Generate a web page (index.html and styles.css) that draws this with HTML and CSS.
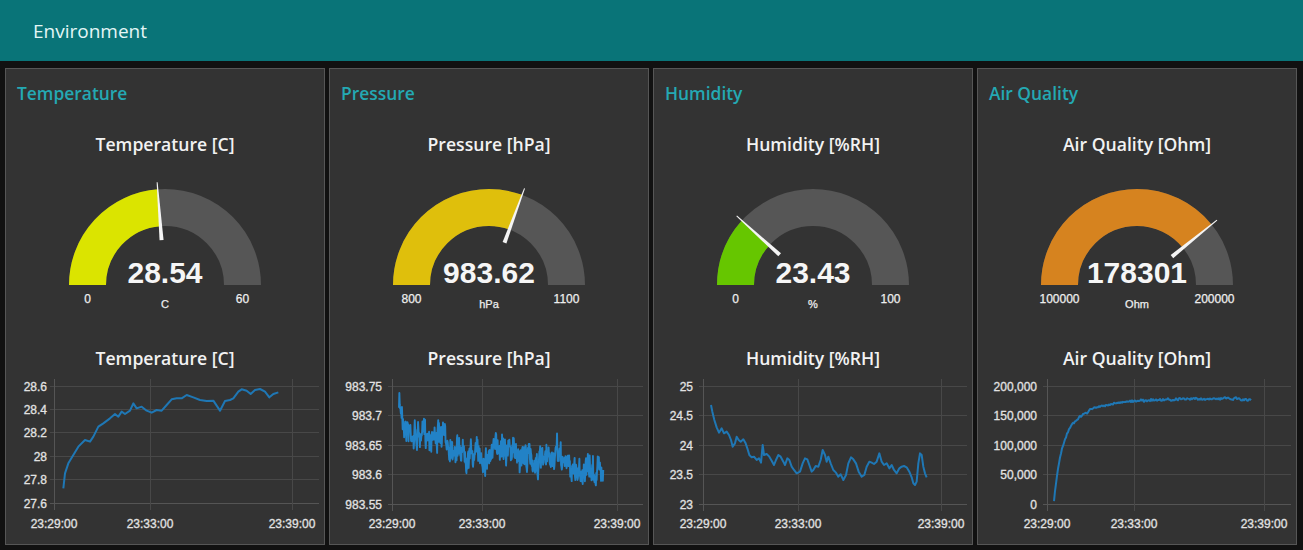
FILE: index.html
```html
<!DOCTYPE html>
<html lang="en">
<head>
<meta charset="utf-8">
<title>Environment</title>
<link rel="stylesheet" href="styles.css">
</head>
<body>
<header class="topbar"><span class="topbar-title">Environment</span></header>
<main class="board">

  <section class="card">
    <h2 class="group-title">Temperature</h2>
    <h3 class="widget-title gauge-title">Temperature [C]</h3>
    <svg class="gauge" width="318" height="160" viewBox="0 0 318 160">
      <path class="g-bg" d="M81.5 129 A77.5 77.5 0 0 1 236.5 129"/>
      <path class="g-val" d="M81.5 129 A77.5 77.5 0 0 1 236.5 129" pathLength="100" stroke="#dbe400" stroke-dasharray="47.57 100"/>
      <polygon class="needle" points="114,127 114,131 56,129.5 56,128.5" transform="rotate(85.62 159 129)"/>
      <text class="g-value" x="159" y="127">28.54</text>
      <text class="g-lim" x="81.5" y="147">0</text>
      <text class="g-lim" x="236.5" y="147">60</text>
      <text class="g-unit" x="159" y="152">C</text>
    </svg>
    <h3 class="widget-title chart-title">Temperature [C]</h3>
    <svg class="chart" width="318" height="166" viewBox="0 0 318 166">
      <g class="grid">
        <line x1="44" x2="313" y1="16.5" y2="16.5"/><line x1="44" x2="313" y1="39.5" y2="39.5"/>
        <line x1="44" x2="313" y1="62.5" y2="62.5"/><line x1="44" x2="313" y1="86.5" y2="86.5"/>
        <line x1="44" x2="313" y1="109.5" y2="109.5"/><line class="axis" x1="44" x2="313" y1="133.5" y2="133.5"/>
        <line class="axis" x1="48.5" x2="48.5" y1="9" y2="140"/><line x1="144.5" x2="144.5" y1="9" y2="140"/><line x1="286.5" x2="286.5" y1="9" y2="140"/>
      </g>
      <g class="ylab">
        <text x="41" y="21">28.6</text><text x="41" y="44">28.4</text><text x="41" y="67">28.2</text>
        <text x="41" y="91">28</text><text x="41" y="114">27.8</text><text x="41" y="138">27.6</text>
      </g>
      <g class="xlab">
        <text x="48" y="157.5">23:29:00</text><text x="144" y="157.5">23:33:00</text><text x="286" y="157.5">23:39:00</text>
      </g>
      <polyline class="series" transform="translate(-6 -30) scale(0.33333)" points="190,445 195,400 205,370 220,345 235,320 255,300 270,305 280,290 295,260 310,250 330,235 345,222 355,230 365,215 375,222 390,212 400,190 410,205 425,200 440,212 455,218 470,210 485,212 500,195 515,178 530,175 545,175 560,165 580,172 600,180 620,183 640,182 660,212 675,183 690,180 700,175 715,155 725,148 740,152 752,162 765,150 780,147 795,155 808,172 820,162 835,157"/>
    </svg>
  </section>

  <section class="card">
    <h2 class="group-title">Pressure</h2>
    <h3 class="widget-title gauge-title">Pressure [hPa]</h3>
    <svg class="gauge" width="318" height="160" viewBox="0 0 318 160">
      <path class="g-bg" d="M81.5 129 A77.5 77.5 0 0 1 236.5 129"/>
      <path class="g-val" d="M81.5 129 A77.5 77.5 0 0 1 236.5 129" pathLength="100" stroke="#dfbf0c" stroke-dasharray="61.21 100"/>
      <polygon class="needle" points="114,127 114,131 56,129.5 56,128.5" transform="rotate(110.17 159 129)"/>
      <text class="g-value" x="159" y="127">983.62</text>
      <text class="g-lim" x="81.5" y="147">800</text>
      <text class="g-lim" x="236.5" y="147">1100</text>
      <text class="g-unit" x="159" y="152">hPa</text>
    </svg>
    <h3 class="widget-title chart-title">Pressure [hPa]</h3>
    <svg class="chart" width="318" height="166" viewBox="0 0 318 166">
      <g class="grid">
        <line x1="58" x2="313" y1="16.5" y2="16.5"/><line x1="58" x2="313" y1="45.5" y2="45.5"/>
        <line x1="58" x2="313" y1="75.5" y2="75.5"/><line x1="58" x2="313" y1="104.5" y2="104.5"/>
        <line class="axis" x1="58" x2="313" y1="134.5" y2="134.5"/>
        <line class="axis" x1="62.5" x2="62.5" y1="9" y2="141"/><line x1="152.5" x2="152.5" y1="9" y2="141"/><line x1="287.5" x2="287.5" y1="9" y2="141"/>
      </g>
      <g class="ylab">
        <text x="52" y="21">983.75</text><text x="52" y="50">983.7</text><text x="52" y="80">983.65</text>
        <text x="52" y="109">983.6</text><text x="52" y="139">983.55</text>
      </g>
      <g class="xlab">
        <text x="62" y="157.5">23:29:00</text><text x="152" y="157.5">23:33:00</text><text x="287" y="157.5">23:39:00</text>
      </g>
      <polyline id="pressure-line" class="series dense" transform="translate(0 -30) scale(0.33333)" points=""/>
    </svg>
  </section>

  <section class="card">
    <h2 class="group-title">Humidity</h2>
    <h3 class="widget-title gauge-title">Humidity [%RH]</h3>
    <svg class="gauge" width="318" height="160" viewBox="0 0 318 160">
      <path class="g-bg" d="M81.5 129 A77.5 77.5 0 0 1 236.5 129"/>
      <path class="g-val" d="M81.5 129 A77.5 77.5 0 0 1 236.5 129" pathLength="100" stroke="#66c600" stroke-dasharray="23.43 100"/>
      <polygon class="needle" points="114,127 114,131 56,129.5 56,128.5" transform="rotate(42.17 159 129)"/>
      <text class="g-value" x="159" y="127">23.43</text>
      <text class="g-lim" x="81.5" y="147">0</text>
      <text class="g-lim" x="236.5" y="147">100</text>
      <text class="g-unit" x="159" y="152">%</text>
    </svg>
    <h3 class="widget-title chart-title">Humidity [%RH]</h3>
    <svg class="chart" width="318" height="166" viewBox="0 0 318 166">
      <g class="grid">
        <line x1="45" x2="313" y1="16.5" y2="16.5"/><line x1="45" x2="313" y1="45.5" y2="45.5"/>
        <line x1="45" x2="313" y1="75.5" y2="75.5"/><line x1="45" x2="313" y1="104.5" y2="104.5"/>
        <line class="axis" x1="45" x2="313" y1="134.5" y2="134.5"/>
        <line class="axis" x1="49.5" x2="49.5" y1="9" y2="141"/><line x1="144.5" x2="144.5" y1="9" y2="141"/><line x1="287.5" x2="287.5" y1="9" y2="141"/>
      </g>
      <g class="ylab">
        <text x="39" y="21">25</text><text x="39" y="50">24.5</text><text x="39" y="80">24</text>
        <text x="39" y="109">23.5</text><text x="39" y="139">23</text>
      </g>
      <g class="xlab">
        <text x="49" y="157.5">23:29:00</text><text x="144" y="157.5">23:33:00</text><text x="287" y="157.5">23:39:00</text>
      </g>
      <polyline class="series" transform="translate(-4 -30) scale(0.33333)" points="183,195 187,215 193,240 200,262 207,278 215,265 222,280 230,275 237,285 243,300 248,320 255,310 260,290 266,300 272,305 280,298 287,310 292,325 298,345 305,352 312,350 320,360 327,355 333,368 338,315 342,345 350,342 358,350 365,362 372,375 378,360 385,345 392,350 400,365 405,375 412,355 418,360 425,380 432,390 440,400 450,395 458,370 465,355 472,358 478,375 485,395 490,390 497,378 505,380 512,360 518,330 525,345 530,365 535,350 542,370 550,390 558,398 565,410 572,403 580,420 588,405 595,370 603,352 610,358 618,370 626,395 635,410 643,405 650,380 658,365 665,368 672,372 680,365 688,340 695,365 702,375 710,370 718,385 725,375 732,390 740,400 748,385 755,380 762,378 770,382 778,395 785,412 790,430 795,435 800,425 805,370 810,340 815,345 820,380 825,400 830,412"/>
    </svg>
  </section>

  <section class="card">
    <h2 class="group-title">Air Quality</h2>
    <h3 class="widget-title gauge-title">Air Quality [Ohm]</h3>
    <svg class="gauge" width="318" height="160" viewBox="0 0 318 160">
      <path class="g-bg" d="M81.5 129 A77.5 77.5 0 0 1 236.5 129"/>
      <path class="g-val" d="M81.5 129 A77.5 77.5 0 0 1 236.5 129" pathLength="100" stroke="#d6831f" stroke-dasharray="78.30 100"/>
      <polygon class="needle" points="114,127 114,131 56,129.5 56,128.5" transform="rotate(140.94 159 129)"/>
      <text class="g-value" x="159" y="127">178301</text>
      <text class="g-lim" x="81.5" y="147">100000</text>
      <text class="g-lim" x="236.5" y="147">200000</text>
      <text class="g-unit" x="159" y="152">Ohm</text>
    </svg>
    <h3 class="widget-title chart-title">Air Quality [Ohm]</h3>
    <svg class="chart" width="318" height="166" viewBox="0 0 318 166">
      <g class="grid">
        <line x1="65" x2="313" y1="16.5" y2="16.5"/><line x1="65" x2="313" y1="45.5" y2="45.5"/>
        <line x1="65" x2="313" y1="75.5" y2="75.5"/><line x1="65" x2="313" y1="104.5" y2="104.5"/>
        <line class="axis" x1="65" x2="313" y1="134.5" y2="134.5"/>
        <line class="axis" x1="69.5" x2="69.5" y1="9" y2="141"/><line x1="156.5" x2="156.5" y1="9" y2="141"/><line x1="286.5" x2="286.5" y1="9" y2="141"/>
      </g>
      <g class="ylab">
        <text x="59" y="21">200,000</text><text x="59" y="50">150,000</text><text x="59" y="80">100,000</text>
        <text x="59" y="109">50,000</text><text x="59" y="139">0</text>
      </g>
      <g class="xlab">
        <text x="69" y="157.5">23:29:00</text><text x="156" y="157.5">23:33:00</text><text x="286" y="157.5">23:39:00</text>
      </g>
      <polyline id="air-line" class="series" transform="translate(-3 -30) scale(0.33333)" points=""/>
    </svg>
  </section>

</main>
<script src="script.js"></script>
</body>
</html>
```

FILE: styles.css
```css
* { box-sizing: border-box; }
html, body { margin: 0; padding: 0; }
body {
  background: #111111;
  width: 1303px;
  height: 550px;
  overflow: hidden;
  font-family: "Open Sans", "Noto Sans", sans-serif;
}
.topbar {
  height: 61px;
  background: #097478;
  display: flex;
  align-items: center;
  padding-left: 33px;
}
.topbar-title {
  color: #e4f6f6;
  font-size: 19px;
  font-weight: 400;
  line-height: 24px;
  padding-top: 1px;
}
.board {
  display: flex;
  gap: 4px;
  padding: 7px 5px 0 5px;
}
.card {
  width: 320px;
  height: 477px;
  background: #333333;
  border: 1px solid #565656;
  display: flex;
  flex-direction: column;
}
.group-title {
  margin: 12px 0 0 11px;
  font-size: 17.4px;
  font-weight: 600;
  line-height: 24px;
  color: #24a9b3;
}
.widget-title {
  margin: 0;
  text-align: center;
  font-size: 17.6px;
  font-weight: 600;
  line-height: 24px;
  color: #f2f2f2;
}
.gauge-title { margin-top: 27px; }
.chart-title { margin-top: 30px; }
.gauge, .chart { display: block; }

.g-bg { fill: none; stroke: #565656; stroke-width: 37; }
.g-val { fill: none; stroke-width: 37; }
.needle { fill: #f4f4f4; }
.g-value {
  font-family: "Liberation Sans", Arial, sans-serif;
  font-weight: 700;
  font-size: 30px;
  fill: #f6f6f6;
  text-anchor: middle;
}
.g-lim, .g-unit {
  font-family: "Liberation Sans", Arial, sans-serif;
  font-size: 12px;
  fill: #eeeeee;
  stroke: #eeeeee;
  stroke-width: 0.25px;
  text-anchor: middle;
}
.g-unit { font-size: 11px; }

.grid line { stroke: #484848; stroke-width: 1; shape-rendering: crispEdges; }
.grid line.axis { stroke: #555555; }
.ylab text, .xlab text {
  font-family: "Liberation Sans", Arial, sans-serif;
  font-size: 12px;
  fill: #e2e2e2;
  stroke: #e2e2e2;
  stroke-width: 0.3px;
}
.ylab text { text-anchor: end; }
.xlab text { text-anchor: middle; }
.series {
  fill: none;
  stroke: #1f77b4;
  stroke-width: 2;
  stroke-linejoin: round;
  vector-effect: non-scaling-stroke;
}
.series.dense { stroke-width: 1.9; stroke: #2282c6; }
```

FILE: script.js
```js
(function () {
  function rng(seed) {
    return function () {
      seed = (seed * 16807) % 2147483647;
      return (seed - 1) / 2147483646;
    };
  }
  function interp(keys, x) {
    for (var i = 1; i < keys.length; i++) {
      if (x <= keys[i][0]) {
        var a = keys[i - 1], b = keys[i];
        return a[1] + (b[1] - a[1]) * (x - a[0]) / (b[0] - a[0]);
      }
    }
    return keys[keys.length - 1][1];
  }
  function build(id, keys, x0, x1, step, noise, walk, seed) {
    var r = rng(seed), w = 0, pts = [];
    for (var x = x0; x <= x1; x += step) {
      w = w * 0.8 + (r() - 0.5) * walk;
      var y = interp(keys, x) + w + (r() - 0.5) * noise;
      pts.push(x.toFixed(1) + "," + y.toFixed(1));
    }
    document.getElementById(id).setAttribute("points", pts.join(" "));
  }
  build("pressure-line",
    [[207,192],[215,215],[230,262],[260,290],[290,280],[320,285],[370,315],[420,340],[470,350],[500,330],[515,300],[545,335],[600,355],[645,375],[680,345],[730,390],[790,392],[820,385]],
    207, 820, 1.1, 62, 30, 7);
  build("air-line",
    [[237,485],[242,440],[247,400],[252,370],[258,340],[265,315],[272,295],[280,275],[290,255],[300,243],[310,232],[322,222],[335,215],[350,207],[370,200],[390,195],[420,190],[450,186],[480,183],[520,180],[580,178],[650,177],[750,176],[830,178]],
    237, 830, 3, 6, 3, 11);
})();
```
